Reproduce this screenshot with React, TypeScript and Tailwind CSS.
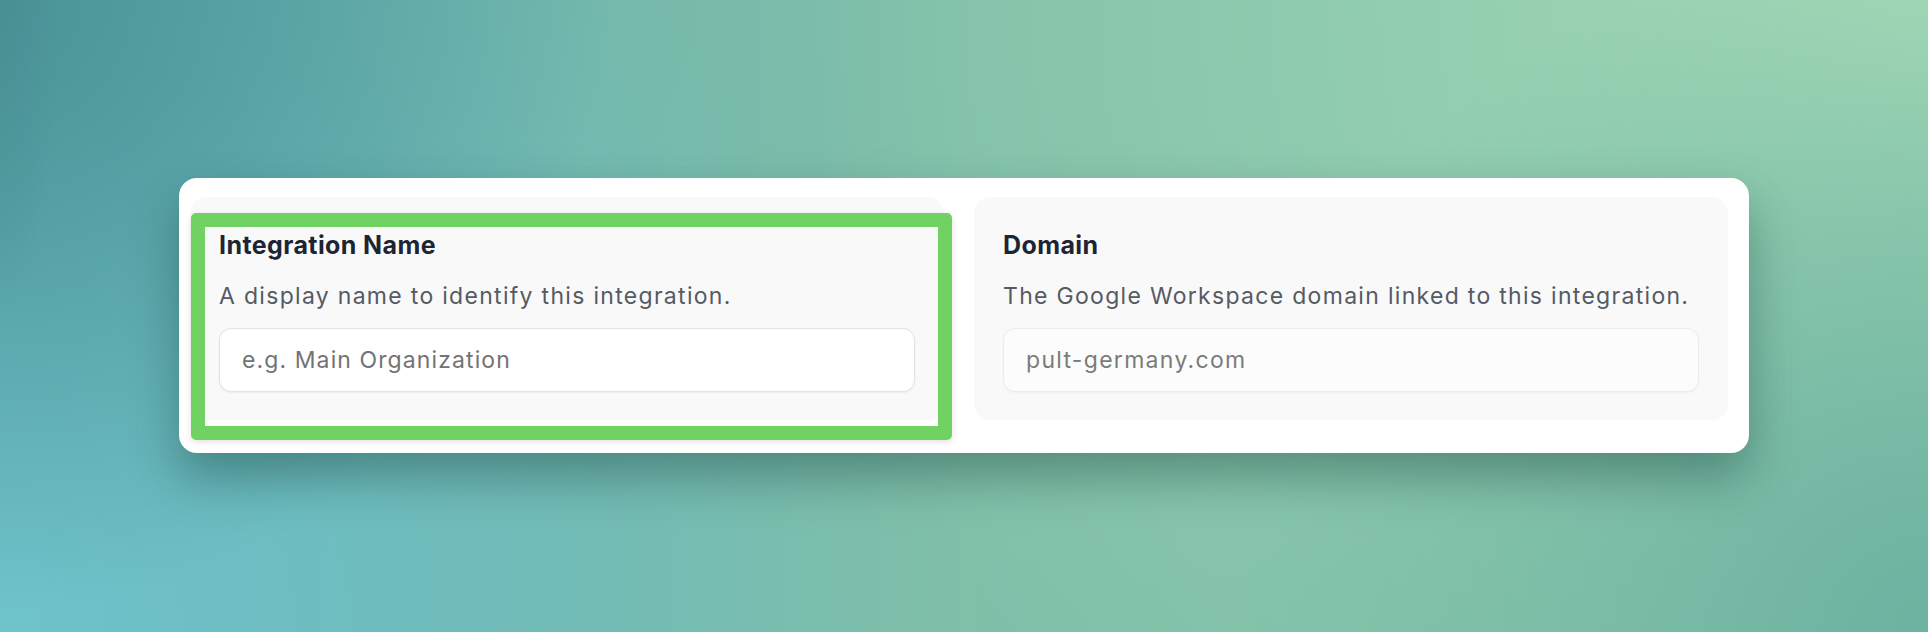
import React from "react";

function Field({
  title,
  desc,
  placeholder,
  disabled,
}: {
  title: string;
  desc: string;
  placeholder: string;
  disabled?: boolean;
}) {
  return (
    <div className="rounded-[16px] bg-[#f9f9f9] px-[29px] pt-[33px] pb-[28px]">
      <div className="text-[25px] leading-[30px] font-bold text-[#1d2433] tracking-[0.4px]">{title}</div>
      <div className="mt-[21px] text-[23px] leading-[30px] text-[#555a63] tracking-[1.3px]">{desc}</div>
      <div
        className={
          disabled
            ? "mt-[17px] h-[64px] rounded-[12px] border border-[#ececec] bg-[#fcfcfc] pl-[22px] flex items-center text-[23px] tracking-[1.3px] text-[#7b7b7b] shadow-[0_1px_2px_rgba(0,0,0,0.04)]"
            : "mt-[17px] h-[64px] rounded-[12px] border border-[#e2e2e2] bg-white pl-[22px] flex items-center text-[23px] tracking-[1.1px] text-[#737373] shadow-[0_1px_2px_rgba(0,0,0,0.06)]"
        }
      >
        {placeholder}
      </div>
    </div>
  );
}

export default function App() {
  return (
    <div
      className="w-full h-[632px] overflow-hidden pt-[178px] pl-[179px] bg-[#78bba9] bg-[radial-gradient(ellipse_60px_320px_at_0%_0%,rgba(70,140,145,0.6)_0%,rgba(70,140,145,0)_100%),radial-gradient(circle_at_0%_0%,#4a9397_0%,rgba(74,147,151,0)_30%),radial-gradient(circle_at_100%_100%,#6cb2a0_0%,rgba(108,178,160,0)_35%),radial-gradient(circle_at_100%_0%,#a5dbb7_0%,rgba(165,219,183,0)_55%),radial-gradient(circle_at_0%_100%,#6fc3cb_0%,rgba(111,195,203,0)_45%),linear-gradient(to_right,#62acad,#80c0a9_50%,#79bba6)]"
      style={{ fontFamily: "Inter, 'Noto Sans', sans-serif" }}
    >
      <div className="relative w-[1570px] rounded-[18px] bg-white pt-[19px] pb-[33px] pl-[11px] pr-[21px] shadow-[0_24px_48px_rgba(20,60,55,0.4)]">
        <div className="grid grid-cols-2 gap-[30px]">
          <Field
            title="Integration Name"
            desc="A display name to identify this integration."
            placeholder="e.g. Main Organization"
          />
          <Field
            title="Domain"
            desc="The Google Workspace domain linked to this integration."
            placeholder="pult-germany.com"
            disabled
          />
        </div>
        <div className="absolute left-[12px] top-[35px] w-[761px] h-[227px] rounded-[5px] border-[14px] border-[#6fd263] shadow-[0_2px_6px_rgba(0,0,0,0.12)] pointer-events-none" />
      </div>
    </div>
  );
}
